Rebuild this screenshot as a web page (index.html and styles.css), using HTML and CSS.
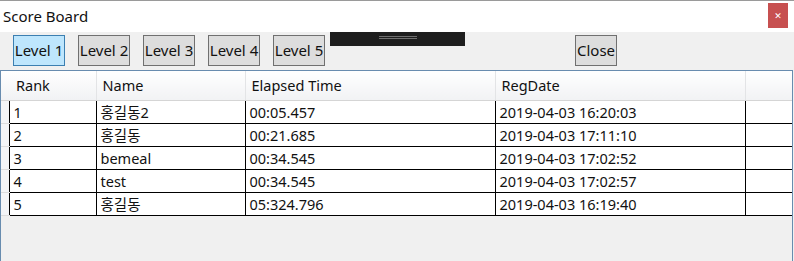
FILE: index.html
```html
<!DOCTYPE html>
<html lang="ko">
<head>
    <meta charset="UTF-8">
    <title>Score Board</title>
    <link rel="stylesheet" href="styles.css">
</head>
<body>
    <div class="window">
        <div class="titlebar">
            <span class="title">Score Board</span>
            <button class="close-x">&#x2715;</button>
        </div>
        <div class="toolbar">
            <button class="btn active">Level 1</button>
            <button class="btn">Level 2</button>
            <button class="btn">Level 3</button>
            <button class="btn">Level 4</button>
            <button class="btn">Level 5</button>
            <button class="btn btn-close">Close</button>
            <div class="debug-bar"><span></span></div>
        </div>
        <div class="grid-box">
            <table class="grid">
                <thead>
                    <tr>
                        <th class="rowhead"></th>
                        <th class="c-rank">Rank</th>
                        <th class="c-name">Name</th>
                        <th class="c-time">Elapsed Time</th>
                        <th class="c-date">RegDate</th>
                        <th class="c-fill"></th>
                    </tr>
                </thead>
                <tbody>
                    <tr><td class="rowhead"></td><td>1</td><td>홍길동2</td><td>00:05.457</td><td>2019-04-03 16:20:03</td><td></td></tr>
                    <tr><td class="rowhead"></td><td>2</td><td>홍길동</td><td>00:21.685</td><td>2019-04-03 17:11:10</td><td></td></tr>
                    <tr><td class="rowhead"></td><td>3</td><td>bemeal</td><td>00:34.545</td><td>2019-04-03 17:02:52</td><td></td></tr>
                    <tr><td class="rowhead"></td><td>4</td><td>test</td><td>00:34.545</td><td>2019-04-03 17:02:57</td><td></td></tr>
                    <tr><td class="rowhead"></td><td>5</td><td>홍길동</td><td>05:324.796</td><td>2019-04-03 16:19:40</td><td></td></tr>
                </tbody>
            </table>
        </div>
    </div>
</body>
</html>
```

FILE: styles.css
```css
html, body {
    margin: 0;
    padding: 0;
    height: 100%;
}

body {
    font-family: 'Noto Sans', 'Noto Sans CJK KR', sans-serif;
    font-size: 14.5px;
    color: #111;
    background-color: #f0f0f0;
    overflow: hidden;
}

.window {
    display: flex;
    flex-direction: column;
    height: 261px;
    width: 794px;
}

.titlebar {
    height: 31px;
    border-top: 1px solid #9a9a9a;
    background-color: #fff;
    display: flex;
    align-items: flex-start;
}

.title {
    font-size: 15px;
    padding: 4px 0 0 3px;
    line-height: 22px;
}

.close-x {
    margin: 2px 6px 0 auto;
    width: 20px;
    height: 25px;
    border: none;
    background-color: #c75050;
    color: #fff;
    font-size: 9px;
    font-weight: bold;
    padding: 0;
    font-family: 'DejaVu Sans', sans-serif;
}

.toolbar {
    position: relative;
    height: 38px;
    display: flex;
    align-items: flex-start;
    padding: 3px 0 0 13px;
    box-sizing: border-box;
    gap: 13px;
}

.btn {
    height: 31px;
    width: 52px;
    padding: 0;
    border: 1px solid #707070;
    background-color: #dddddd;
    font-family: 'Noto Sans', sans-serif;
    font-size: 15px;
    color: #111;
    line-height: 29px;
    white-space: nowrap;
}

.btn.active {
    background-color: #bee6fd;
    border-color: #3c7fb1;
}

.btn-close {
    width: 42px;
    margin-left: 237px;
}

.debug-bar {
    position: absolute;
    left: 330px;
    top: 0;
    width: 135px;
    height: 14px;
    background-color: #1e1e1e;
}

.debug-bar span {
    position: absolute;
    left: 49px;
    top: 4px;
    width: 38px;
    height: 1px;
    border-top: 1px solid #6f6f6f;
    border-bottom: 1px solid #6f6f6f;
}

.grid-box {
    flex: 1;
    border: 1px solid #688caf;
    border-bottom: none;
    width: 791px;
    background-color: #f0f0f0;
}

.grid {
    border-collapse: collapse;
    table-layout: fixed;
    width: 791px;
}

.grid th {
    height: 29px;
    padding: 0 0 0 6px;
    text-align: left;
    font-weight: normal;
    background: linear-gradient(#ffffff, #f1f2f4);
    border-bottom: 1px solid #d5d5d5;
    border-left: 1px solid #e3e4e6;
    box-sizing: border-box;
    white-space: nowrap;
}

.grid th.rowhead,
.grid th.c-rank {
    border-left: none;
}

.grid th.c-rank {
    padding-left: 7px;
}

.grid td {
    height: 22px;
    padding: 0 0 0 4px;
    background-color: #fff;
    border-left: 1px solid #000;
    border-bottom: 1px solid #000;
    white-space: nowrap;
    line-height: 20px;
    overflow: hidden;
}

.grid td.rowhead {
    background-color: #f4f5f7;
    border-left: none;
    border-bottom: 1px solid #dddddd;
    padding: 0;
}

.rowhead { width: 8px; }
.c-rank { width: 87px; }
.c-name { width: 149px; }
.c-time { width: 250px; }
.c-date { width: 250px; }
.c-fill { width: 47px; }
```
